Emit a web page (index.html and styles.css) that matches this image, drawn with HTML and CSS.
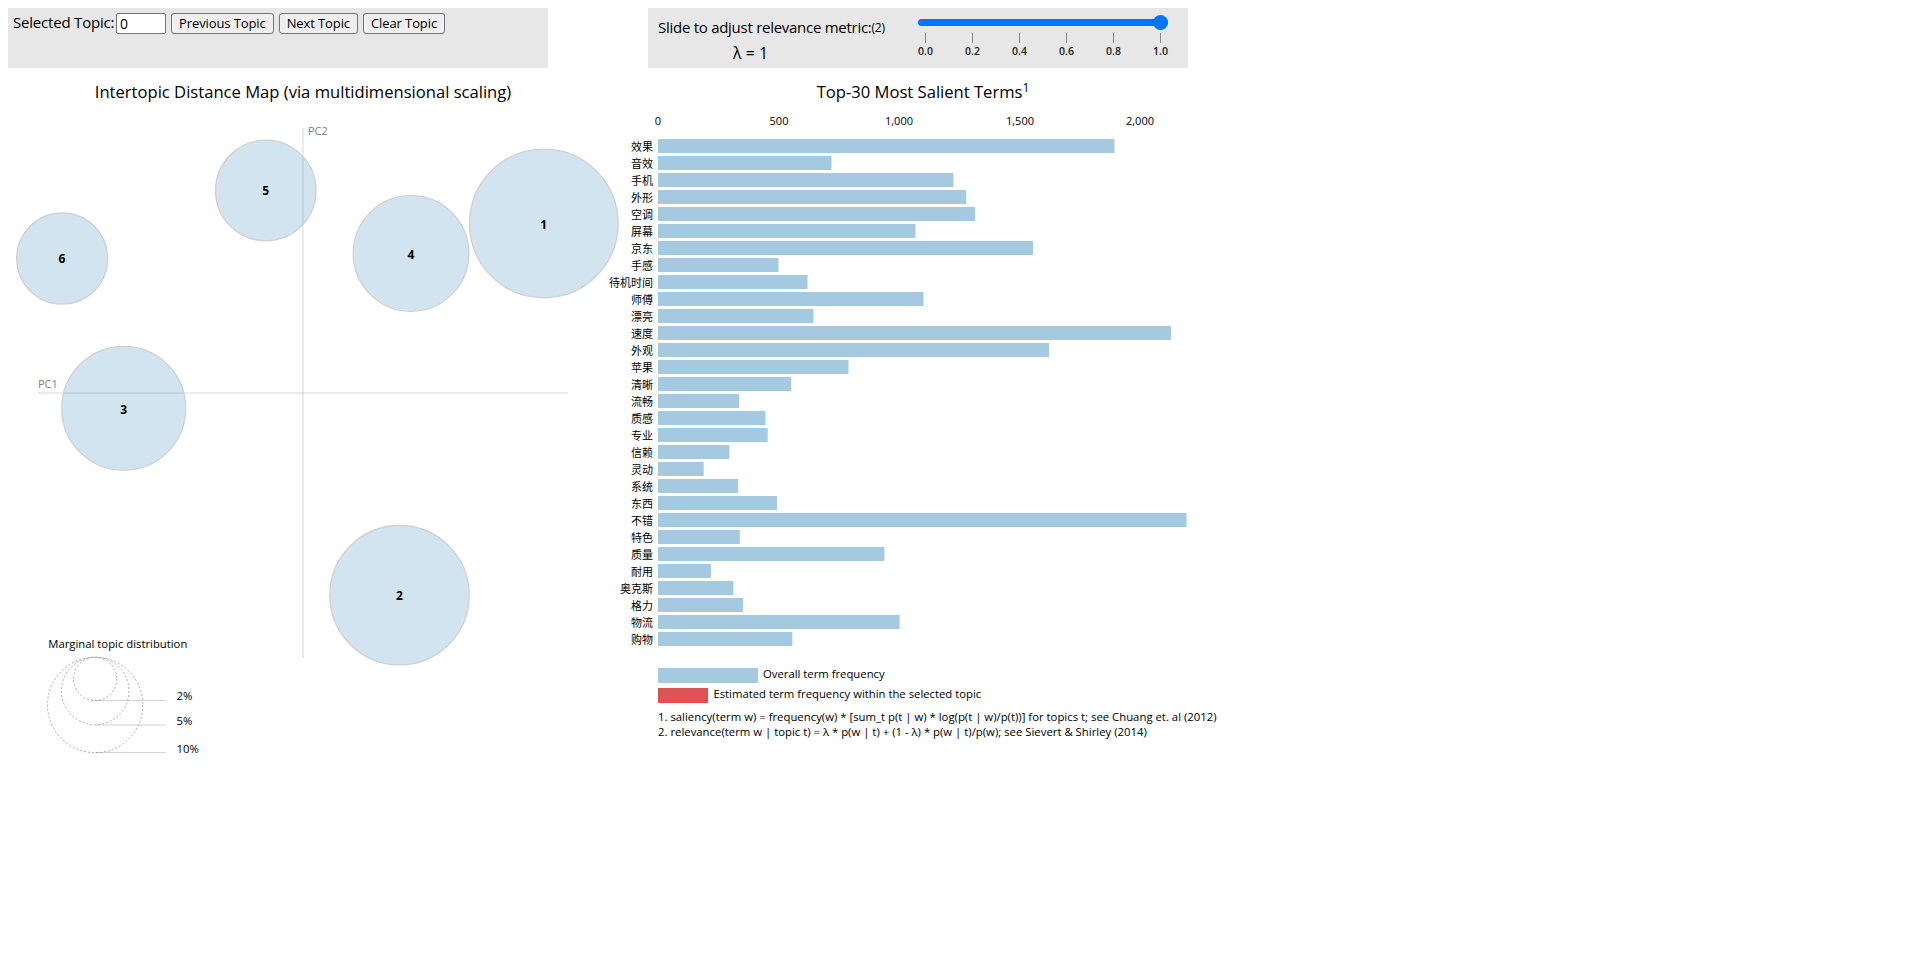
FILE: index.html
```html
<!DOCTYPE html>
<html lang="en">
<head>
    <meta charset="UTF-8">
    <meta name="viewport" content="width=device-width, initial-scale=1.0">
    <title>LDAvis</title>
    <link rel="stylesheet" href="styles.css">
</head>
<body>
    <div class="vis">
        <div class="column">
            <div class="panel topic-panel">
                <label class="topic-label" for="topic">Selected Topic:</label>
                <input class="topic-input" id="topic" type="text" value="0">
                <button class="topic-button">Previous Topic</button>
                <button class="topic-button">Next Topic</button>
                <button class="topic-button">Clear Topic</button>
            </div>

            <!-- viewBox keeps the chart numbers in page pixels -->
            <svg class="chart" viewBox="8 68 540 700">
                <text class="chart-title" x="303" y="97.5">Intertopic Distance Map (via multidimensional scaling)</text>

                <line class="axis" x1="303" y1="128" x2="303" y2="658"></line>
                <line class="axis" x1="38" y1="393" x2="568" y2="393"></line>
                <text class="axis-label" x="38" y="388">PC1</text>
                <text class="axis-label" x="308" y="135">PC2</text>

                <circle class="topic" cx="543.8" cy="223.5" r="74.3"></circle>
                <circle class="topic" cx="399.5" cy="595.2" r="69.7"></circle>
                <circle class="topic" cx="123.7" cy="408.3" r="62"></circle>
                <circle class="topic" cx="411" cy="253.5" r="57.8"></circle>
                <circle class="topic" cx="265.8" cy="190.5" r="50.3"></circle>
                <circle class="topic" cx="62.2" cy="258.5" r="45.5"></circle>
                <text class="topic-number" x="543.8" y="228.5">1</text>
                <text class="topic-number" x="399.5" y="599.5">2</text>
                <text class="topic-number" x="123.7" y="413.5">3</text>
                <text class="topic-number" x="411" y="258.5">4</text>
                <text class="topic-number" x="265.8" y="195">5</text>
                <text class="topic-number" x="62" y="263">6</text>

                <text class="small-text" x="48.3" y="648">Marginal topic distribution</text>
                <circle class="size-ring" cx="95.2" cy="679" r="21.6"></circle>
                <circle class="size-ring" cx="95.2" cy="691" r="33.8"></circle>
                <circle class="size-ring" cx="95.2" cy="705" r="47.7"></circle>
                <line class="size-line" x1="95" y1="700.5" x2="166" y2="700.5"></line>
                <line class="size-line" x1="95" y1="725" x2="166" y2="725"></line>
                <line class="size-line" x1="95" y1="752.5" x2="166" y2="752.5"></line>
                <text class="small-text" x="176.5" y="700">2%</text>
                <text class="small-text" x="176.5" y="725">5%</text>
                <text class="small-text" x="176.5" y="753">10%</text>
            </svg>
        </div>

        <div class="column">
            <div class="panel slider-panel">
                <div class="slider-text">
                    <div class="slider-label">Slide to adjust relevance metric:<span class="slider-note">(2)</span></div>
                    <div class="lambda">λ = 1</div>
                </div>
                <div class="slider">
                    <input class="slider-input" type="range" min="0" max="1" step="0.01" value="1">
                    <div class="ticks">
                        <span class="tick">0.0</span>
                        <span class="tick">0.2</span>
                        <span class="tick">0.4</span>
                        <span class="tick">0.6</span>
                        <span class="tick">0.8</span>
                        <span class="tick">1.0</span>
                    </div>
                </div>
            </div>

            <svg class="chart" viewBox="648 68 540 700">
                <text class="chart-title" x="923" y="97.5">Top-30 Most Salient Terms<tspan class="title-note" dy="-6">1</tspan></text>

                <text class="bar-tick" x="658" y="125">0</text>
                <text class="bar-tick" x="779" y="125">500</text>
                <text class="bar-tick" x="899" y="125">1,000</text>
                <text class="bar-tick" x="1020" y="125">1,500</text>
                <text class="bar-tick" x="1140" y="125">2,000</text>

                <rect class="bar" x="658" y="139" width="456.5" height="14"></rect>
                <rect class="bar" x="658" y="156" width="173.5" height="14"></rect>
                <rect class="bar" x="658" y="173" width="295.5" height="14"></rect>
                <rect class="bar" x="658" y="190" width="308.1" height="14"></rect>
                <rect class="bar" x="658" y="207" width="317" height="14"></rect>
                <rect class="bar" x="658" y="224" width="257.5" height="14"></rect>
                <rect class="bar" x="658" y="241" width="375" height="14"></rect>
                <rect class="bar" x="658" y="258" width="120.5" height="14"></rect>
                <rect class="bar" x="658" y="275" width="149.5" height="14"></rect>
                <rect class="bar" x="658" y="292" width="265.5" height="14"></rect>
                <rect class="bar" x="658" y="309" width="155.5" height="14"></rect>
                <rect class="bar" x="658" y="326" width="513" height="14"></rect>
                <rect class="bar" x="658" y="343" width="391" height="14"></rect>
                <rect class="bar" x="658" y="360" width="190.5" height="14"></rect>
                <rect class="bar" x="658" y="377" width="133.2" height="14"></rect>
                <rect class="bar" x="658" y="394" width="81" height="14"></rect>
                <rect class="bar" x="658" y="411" width="107.5" height="14"></rect>
                <rect class="bar" x="658" y="428" width="109.7" height="14"></rect>
                <rect class="bar" x="658" y="445" width="71.4" height="14"></rect>
                <rect class="bar" x="658" y="462" width="45.7" height="14"></rect>
                <rect class="bar" x="658" y="479" width="80" height="14"></rect>
                <rect class="bar" x="658" y="496" width="119" height="14"></rect>
                <rect class="bar" x="658" y="513" width="528.5" height="14"></rect>
                <rect class="bar" x="658" y="530" width="81.8" height="14"></rect>
                <rect class="bar" x="658" y="547" width="226.5" height="14"></rect>
                <rect class="bar" x="658" y="564" width="53" height="14"></rect>
                <rect class="bar" x="658" y="581" width="75.4" height="14"></rect>
                <rect class="bar" x="658" y="598" width="85" height="14"></rect>
                <rect class="bar" x="658" y="615" width="241.6" height="14"></rect>
                <rect class="bar" x="658" y="632" width="134.3" height="14"></rect>

                <text class="term" x="653" y="151">效果</text>
                <text class="term" x="653" y="168">音效</text>
                <text class="term" x="653" y="185">手机</text>
                <text class="term" x="653" y="202">外形</text>
                <text class="term" x="653" y="219">空调</text>
                <text class="term" x="653" y="236">屏幕</text>
                <text class="term" x="653" y="253">京东</text>
                <text class="term" x="653" y="270">手感</text>
                <text class="term" x="653" y="287">待机时间</text>
                <text class="term" x="653" y="304">师傅</text>
                <text class="term" x="653" y="321">漂亮</text>
                <text class="term" x="653" y="338">速度</text>
                <text class="term" x="653" y="355">外观</text>
                <text class="term" x="653" y="372">苹果</text>
                <text class="term" x="653" y="389">清晰</text>
                <text class="term" x="653" y="406">流畅</text>
                <text class="term" x="653" y="423">质感</text>
                <text class="term" x="653" y="440">专业</text>
                <text class="term" x="653" y="457">信赖</text>
                <text class="term" x="653" y="474">灵动</text>
                <text class="term" x="653" y="491">系统</text>
                <text class="term" x="653" y="508">东西</text>
                <text class="term" x="653" y="525">不错</text>
                <text class="term" x="653" y="542">特色</text>
                <text class="term" x="653" y="559">质量</text>
                <text class="term" x="653" y="576">耐用</text>
                <text class="term" x="653" y="593">奥克斯</text>
                <text class="term" x="653" y="610">格力</text>
                <text class="term" x="653" y="627">物流</text>
                <text class="term" x="653" y="644">购物</text>

                <rect class="bar" x="658" y="668" width="100" height="15"></rect>
                <text class="small-text" x="763" y="678">Overall term frequency</text>
                <rect class="bar-topic" x="658" y="688" width="50" height="15"></rect>
                <text class="small-text" x="713.4" y="698">Estimated term frequency within the selected topic</text>
                <text class="small-text note-text" x="658" y="721">1. saliency(term w) = frequency(w) * [sum_t p(t | w) * log(p(t | w)/p(t))] for topics t; see Chuang et. al (2012)</text>
                <text class="small-text note-text" x="658" y="736">2. relevance(term w | topic t) = λ * p(w | t) + (1 - λ) * p(w | t)/p(w); see Sievert &amp; Shirley (2014)</text>
            </svg>
        </div>
    </div>
</body>
</html>
```

FILE: styles.css
```css
* {
    box-sizing: border-box;
}

body {
    margin: 8px;
    background-color: #fff;
    color: #000;
    font-family: "Open Sans", "Noto Sans CJK SC", sans-serif;
}

.vis {
    display: flex;
    gap: 100px;
}

.column {
    width: 540px;
    flex-shrink: 0;
}

.panel {
    height: 60px;
    background-color: #e7e7e7;
}

/* topic selector */
.topic-panel {
    display: flex;
    align-items: flex-start;
    padding: 5px 0 0 5px;
}

.topic-label {
    width: 103px;
    font-size: 15px;
    line-height: 19px;
    letter-spacing: -0.2px;
}

.topic-input {
    width: 50px;
    height: 21px;
    margin-right: 5px;
    padding: 0 3px 1px;
    border: 1px solid #767676;
    border-radius: 2px;
    background-color: #fff;
    font: 14px "Open Sans", sans-serif;
}

.topic-button {
    height: 21px;
    margin-right: 5px;
    padding: 0 7px 2px;
    border: 1px solid #767676;
    border-radius: 3px;
    background-color: #efefef;
    font: 13px "Open Sans", sans-serif;
    letter-spacing: -0.1px;
}

/* relevance slider */
.slider-panel {
    display: flex;
}

.slider-text {
    width: 270px;
    padding: 9px 0 0 10px;
}

.slider-label {
    font-size: 15px;
    line-height: 20px;
    letter-spacing: -0.27px;
}

.slider-note {
    font-size: 12px;
    vertical-align: 1px;
}

.lambda {
    margin-top: 5px;
    padding-left: 75px;
    font-size: 16px;
    line-height: 20px;
}

.slider {
    width: 250px;
    padding-top: 7px;
}

.slider-input {
    display: block;
    width: 250px;
    height: 15px;
    margin: 0;
    appearance: none;
    background: transparent;
}

.slider-input::-webkit-slider-runnable-track {
    height: 7px;
    border-radius: 4px;
    background-color: #0075ff;
}

.slider-input::-webkit-slider-thumb {
    appearance: none;
    width: 15px;
    height: 15px;
    margin-top: -4px;
    border-radius: 50%;
    background-color: #0075ff;
}

.ticks {
    display: flex;
    margin: 3px 0 0 -16px;
}

.tick {
    flex: 0 0 47px;
    font-size: 10.5px;
    font-weight: 600;
    line-height: 16px;
    text-align: center;
    color: #222;
}

.tick::before {
    content: "";
    display: block;
    width: 1px;
    height: 10px;
    margin: 0 auto;
    background-color: #888;
}

/* charts */
.chart {
    display: block;
    width: 540px;
    height: 700px;
    overflow: visible;
}

.chart-title {
    font-size: 16.6px;
    text-anchor: middle;
}

.title-note {
    font-size: 12px;
}

.axis {
    stroke: #808080;
    stroke-opacity: 0.15;
    stroke-width: 2;
}

.axis-label {
    fill: #808080;
    font-size: 11px;
}

.topic {
    fill: #1f77b4;
    fill-opacity: 0.2;
    stroke: #d0d0d0;
    stroke-width: 1.3;
}

.topic-number {
    font-size: 12px;
    font-weight: 700;
    text-anchor: middle;
}

.small-text {
    font-size: 11.3px;
}

.note-text {
    font-size: 11.35px;
}

.size-ring {
    fill: none;
    stroke: #aaa;
    stroke-dasharray: 2 2;
}

.size-line {
    stroke: #808080;
    stroke-opacity: 0.35;
}

.bar-tick {
    font-size: 11px;
    text-anchor: middle;
}

.bar {
    fill: #1f77b4;
    fill-opacity: 0.4;
}

.bar-topic {
    fill: #d62728;
    fill-opacity: 0.8;
}

.term {
    font-size: 11px;
    text-anchor: end;
}
```
